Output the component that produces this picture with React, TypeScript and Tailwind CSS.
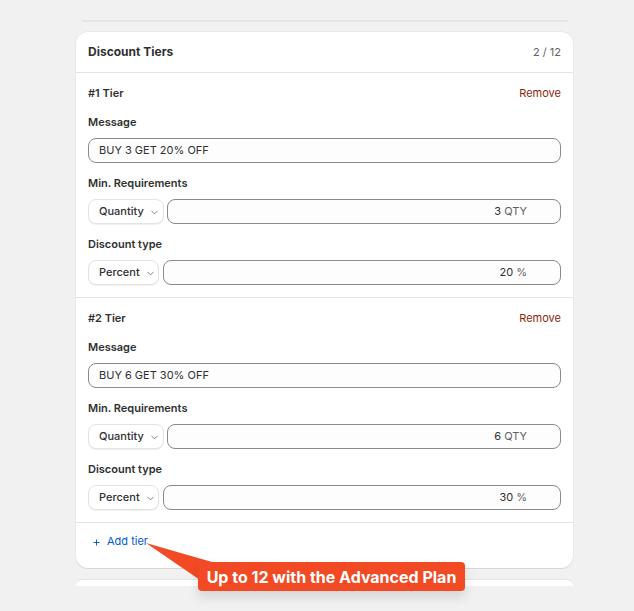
import { ChevronDown, Plus } from "lucide-react";

interface TierProps {
  index: number;
  message: string;
  qty: string;
  percent: string;
}

const SelectButton = ({ label, width }: { label: string; width: string }) => (
  <button
    className={`${width} h-[25px] shrink-0 flex items-center gap-[5px] pl-[10px] rounded-lg bg-white border border-[#e3e3e3] shadow-[0_1px_0_rgba(0,0,0,0.06)] text-[11px] font-medium text-[#303030]`}
  >
    {label}
    <ChevronDown size={11} strokeWidth={1.5} className="text-[#4a4a4a] mt-[2px]" />
  </button>
);

const Tier = ({ index, message, qty, percent }: TierProps) => (
  <div className="px-3 pt-3 pb-3 border-b border-[#e3e3e3]">
    <div className="flex justify-between items-center leading-4">
      <span className="text-[11px] font-semibold text-[#303030]">#{index} Tier</span>
      <button className="text-[11px] text-[#8e1f0b]">Remove</button>
    </div>

    {/* Message */}
    <div className="mt-[13px] text-[11px] font-semibold leading-4 text-[#303030]">Message</div>
    <div className="mt-2 h-[25px] flex items-center px-[10px] rounded-lg border border-[#8a8a8a] bg-[#fdfdfd] text-[11px] text-[#303030]">
      {message}
    </div>

    {/* Min requirements */}
    <div className="mt-3 text-[11px] font-semibold leading-4 text-[#303030]">Min. Requirements</div>
    <div className="mt-2 flex gap-[3px]">
      <SelectButton label="Quantity" width="w-[76px]" />
      <div className="flex-1 h-[25px] flex items-center justify-end pr-[33px] rounded-lg border border-[#8a8a8a] bg-[#fdfdfd] text-[11px]">
        <span className="text-[#303030]">{qty}</span>
        <span className="ml-[3px] text-[#616161]">QTY</span>
      </div>
    </div>

    {/* Discount type */}
    <div className="mt-3 text-[11px] font-semibold leading-4 text-[#303030]">Discount type</div>
    <div className="mt-2 flex gap-[4px]">
      <SelectButton label="Percent" width="w-[71px]" />
      <div className="flex-1 h-[25px] flex items-center justify-end pr-[33px] rounded-lg border border-[#8a8a8a] bg-[#fdfdfd] text-[11px]">
        <span className="text-[#303030]">{percent}</span>
        <span className="ml-[3px] text-[#616161]">%</span>
      </div>
    </div>
  </div>
);

export default function App() {
  return (
    <div
      className="relative w-full h-[611px] overflow-hidden bg-[#f1f1f1]"
      style={{ fontFamily: "Inter, 'Noto Sans', sans-serif" }}
    >
      {/* edge of the card above */}
      <div className="pt-5 pl-[82px]">
        <div className="w-[486px] h-[2px] bg-[#e4e4e4]" />
      </div>

      {/* Discount tiers card */}
      <div className="ml-[76px] mt-[10px] w-[497px] bg-white rounded-xl shadow-[0_1px_0_rgba(0,0,0,0.08),0_0_0_1px_rgba(0,0,0,0.03)] overflow-hidden">
        <div className="px-3 pt-3 pb-3 flex justify-between items-center leading-4 border-b border-[#e3e3e3]">
          <span className="text-[12px] font-bold text-[#303030]">Discount Tiers</span>
          <span className="text-[11px] text-[#616161]">2 / 12</span>
        </div>

        <Tier index={1} message="BUY 3 GET 20% OFF" qty="3" percent="20" />
        <Tier index={2} message="BUY 6 GET 30% OFF" qty="6" percent="30" />

        <div className="h-[45px] px-4 pt-[10px]">
          <button className="flex items-center gap-[6px] text-[11px] leading-4 text-[#005bd3]">
            <Plus size={9} strokeWidth={2.5} className="mt-[3px]" />
            Add tier
          </button>
        </div>
      </div>

      {/* next card */}
      <div className="ml-[76px] mt-3 w-[497px] h-[6px] bg-white rounded-t-xl shadow-[0_-1px_0_rgba(0,0,0,0.05)]" />

      {/* callout */}
      <svg
        className="absolute left-[140px] top-[538px]"
        width="80"
        height="48"
        viewBox="0 0 80 48"
      >
        <polygon points="6,5 72,24 60,42" fill="#f24a24" />
      </svg>
      <div className="absolute left-[198px] top-[562px] w-[267px] h-[29px] flex items-center justify-center rounded-[4px] bg-[#f24a24] text-white text-[16px] font-bold shadow-[0_6px_12px_rgba(0,0,0,0.12)]">
        Up to 12 with the Advanced Plan
      </div>
    </div>
  );
}
